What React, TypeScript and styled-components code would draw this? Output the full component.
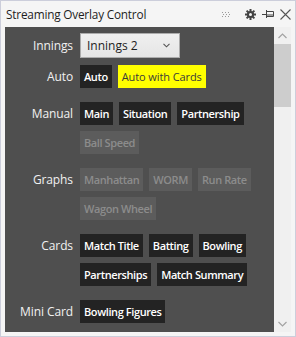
import { createGlobalStyle } from "styled-components";
import styled from "styled-components";

const GlobalStyle = createGlobalStyle`
  html, body {
    margin: 0;
    padding: 0;
    background: #ffffff;
  }
  * {
    box-sizing: border-box;
  }
`;

type Tone = "on" | "off" | "hot";

const groups: { label: string; buttons: [string, Tone][] }[] = [
  { label: "Auto", buttons: [["Auto", "on"], ["Auto with Cards", "hot"]] },
  {
    label: "Manual",
    buttons: [
      ["Main", "on"],
      ["Situation", "on"],
      ["Partnership", "on"],
      ["Ball Speed", "off"],
    ],
  },
  {
    label: "Graphs",
    buttons: [
      ["Manhattan", "off"],
      ["WORM", "off"],
      ["Run Rate", "off"],
      ["Wagon Wheel", "off"],
    ],
  },
  {
    label: "Cards",
    buttons: [
      ["Match Title", "on"],
      ["Batting", "on"],
      ["Bowling", "on"],
      ["Partnerships", "on"],
      ["Match Summary", "on"],
    ],
  },
  { label: "Mini Card", buttons: [["Bowling Figures", "on"]] },
];

const App = () => {
  return (
    <>
      <GlobalStyle />
      <Window>
        <TitleBar>
          <Title>Streaming Overlay Control</Title>
          <Tools>
            <Grip>
              <svg width="9" height="5" viewBox="0 0 9 5">
                {[0, 3, 6].map((x) =>
                  [0, 2, 4].map((y) => (
                    <rect key={`${x}-${y}`} x={x + (y === 2 ? 1 : 0)} y={y} width="1" height="1" fill="#9a9a9a" />
                  ))
                )}
              </svg>
            </Grip>
            <svg width="11" height="11" viewBox="0 0 11 11">
              <g fill="#444">
                <circle cx="5.5" cy="5.5" r="3.6" />
                <rect x="4.5" y="0" width="2" height="11" />
                <rect x="0" y="4.5" width="11" height="2" />
                <rect x="4.5" y="0" width="2" height="11" transform="rotate(45 5.5 5.5)" />
                <rect x="4.5" y="0" width="2" height="11" transform="rotate(-45 5.5 5.5)" />
              </g>
              <circle cx="5.5" cy="5.5" r="1.5" fill="#f5f5f5" />
            </svg>
            <svg width="12" height="10" viewBox="0 0 12 10">
              <g fill="none" stroke="#444" strokeWidth="1">
                <path d="M0 5.5 H4" />
                <path d="M4.5 1 V9" />
                <path d="M4.5 2.5 H11.5 V7.5 H4.5" />
                <path d="M4.5 6 H11.5" />
              </g>
            </svg>
            <svg width="11" height="11" viewBox="0 0 11 11">
              <path d="M0.5 0.5 L10.5 10.5 M10.5 0.5 L0.5 10.5" stroke="#555" strokeWidth="1.1" />
            </svg>
          </Tools>
        </TitleBar>
        <Body>
          <Panel>
            <Form>
              <Row $gap={0}>
                <Label>Innings</Label>
                <div>
                  <Select>
                    <span>Innings 2</span>
                    <svg width="7" height="5" viewBox="0 0 7 5">
                      <path d="M0.5 0.8 L3.5 3.8 L6.5 0.8" fill="none" stroke="#555" strokeWidth="1.1" />
                    </svg>
                  </Select>
                </div>
              </Row>
              {groups.map((g, i) => (
                <Row key={g.label} $gap={i === 0 ? 7 : 14}>
                  <Label>{g.label}</Label>
                  <Buttons>
                    {g.buttons.map(([text, tone]) => (
                      <Btn key={text} $tone={tone}>
                        {text}
                      </Btn>
                    ))}
                  </Buttons>
                </Row>
              ))}
            </Form>
          </Panel>
          <ScrollBar>
            <Arrow>
              <svg width="9" height="6" viewBox="0 0 9 6">
                <path d="M0.5 5 L4.5 1 L8.5 5" fill="none" stroke="#a3a3a3" strokeWidth="1.2" />
              </svg>
            </Arrow>
            <Thumb />
            <Track />
            <Arrow>
              <svg width="9" height="6" viewBox="0 0 9 6">
                <path d="M0.5 1 L4.5 5 L8.5 1" fill="none" stroke="#a3a3a3" strokeWidth="1.2" />
              </svg>
            </Arrow>
          </ScrollBar>
        </Body>
      </Window>
    </>
  );
};

export default App;

const Window = styled.div`
  width: 296px;
  height: 337px;
  border: 1px solid #cccedb;
  background: #f5f5f5;
  display: flex;
  flex-direction: column;
  font-family: "Open Sans", "Noto Sans", sans-serif;
`;

const TitleBar = styled.div`
  height: 26px;
  display: flex;
  align-items: center;
  justify-content: space-between;
  padding: 0 4px 0 5px;
`;

const Title = styled.div`
  font-size: 11.8px;
  color: #1e1e1e;
  letter-spacing: -0.2px;
`;

const Tools = styled.div`
  display: flex;
  align-items: center;
  gap: 6px;
`;

const Grip = styled.div`
  display: flex;
  align-items: center;
  margin-right: 8px;
`;

const Body = styled.div`
  flex: 1;
  display: flex;
  padding: 0 4px 4px 4px;
  min-height: 0;
`;

const Panel = styled.div`
  flex: 1;
  background: #4f4f4f;
  overflow: hidden;
`;

const Form = styled.div`
  display: flex;
  flex-direction: column;
  padding-top: 6px;
`;

const Row = styled.div<{ $gap: number }>`
  display: grid;
  grid-template-columns: 68px 1fr;
  column-gap: 7px;
  align-items: start;
  margin-top: ${(p) => p.$gap}px;
`;

const Label = styled.div`
  text-align: right;
  color: #f1f1f1;
  font-size: 12px;
  line-height: 23px;
  white-space: nowrap;
  letter-spacing: -0.1px;

  ${Row}:first-child & {
    line-height: 25px;
  }
`;

const Select = styled.div`
  width: 100px;
  height: 25px;
  border: 1px solid #acacac;
  background: linear-gradient(#f0f0f0, #e5e5e5);
  display: flex;
  align-items: center;
  justify-content: space-between;
  padding: 0 9px 0 6px;
  font-size: 12px;
  color: #1e1e1e;
`;

const Buttons = styled.div`
  display: flex;
  flex-wrap: wrap;
  gap: 6px;
  padding-right: 4px;
`;

const Btn = styled.div<{ $tone: Tone }>`
  height: 23px;
  line-height: 23px;
  padding: 0 4px;
  font-size: 11px;
  font-weight: ${(p) => (p.$tone === "hot" ? 400 : 600)};
  letter-spacing: ${(p) => (p.$tone === "hot" ? "-0.1px" : "-0.4px")};
  white-space: nowrap;
  background: ${(p) =>
    p.$tone === "on" ? "#232323" : p.$tone === "hot" ? "#ffff00" : "#5c5c5c"};
  color: ${(p) =>
    p.$tone === "on" ? "#ffffff" : p.$tone === "hot" ? "#3a3a3a" : "#8c8c8c"};
`;

const ScrollBar = styled.div`
  width: 17px;
  background: #f0f0f0;
  display: flex;
  flex-direction: column;
`;

const Arrow = styled.div`
  height: 17px;
  display: flex;
  align-items: center;
  justify-content: center;
`;

const Thumb = styled.div`
  height: 63px;
  background: #cdcdcd;
`;

const Track = styled.div`
  flex: 1;
`;
